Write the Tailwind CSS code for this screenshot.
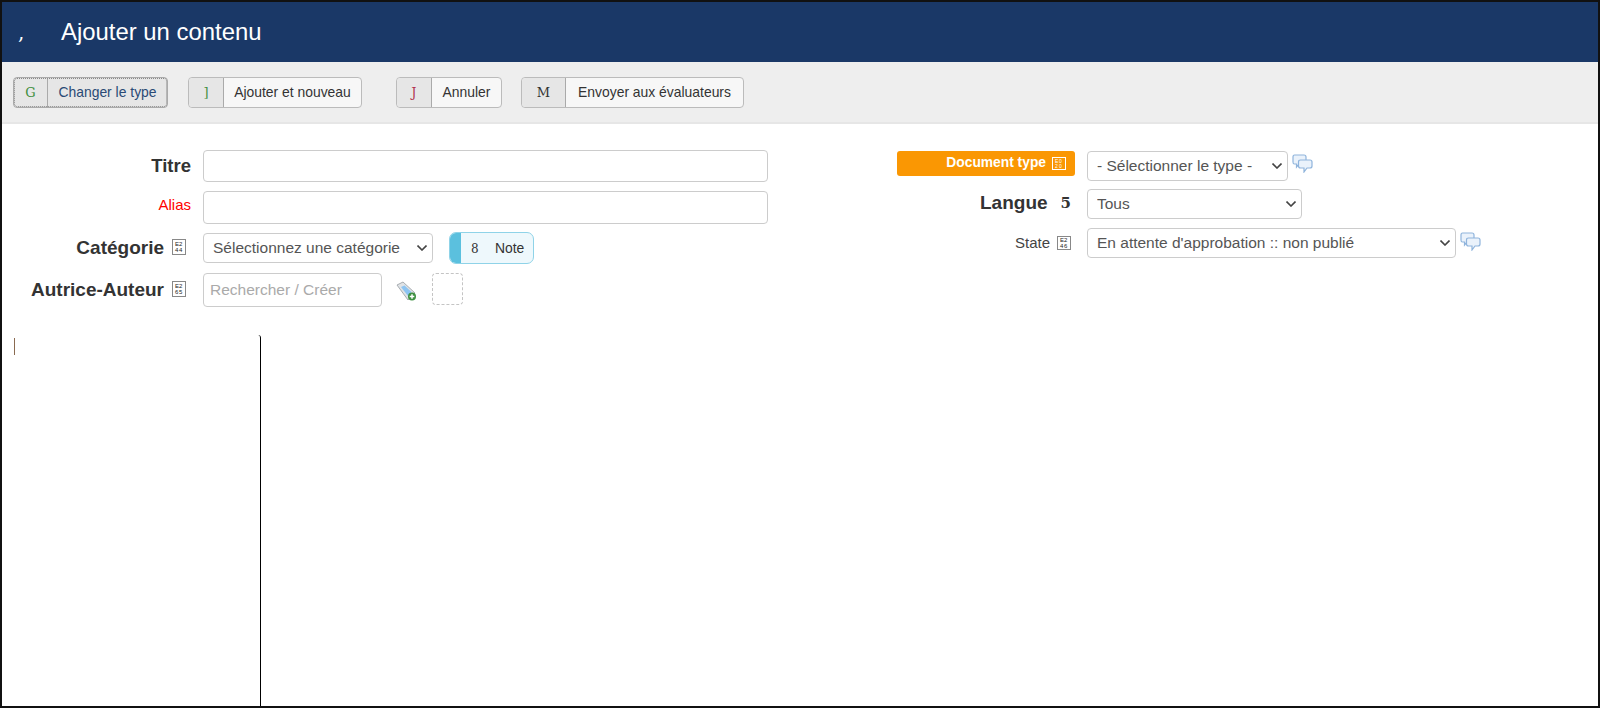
<!DOCTYPE html>
<html lang="fr">
  <head>
    <meta charset="UTF-8" />
    <title>Ajouter un contenu</title>
    <script src="https://cdn.jsdelivr.net/npm/@tailwindcss/browser@4"></script>
  </head>
  <body class="h-screen overflow-hidden bg-white border-2 border-[#111] flex flex-col font-['Liberation_Sans',Arial,sans-serif] text-[#333]">
    <!-- Title bar -->
    <header class="h-[60px] shrink-0 bg-[#1a3867] text-white flex items-center">
      <span class="w-[59px] pl-[16px] text-[20px] font-['DejaVu_Serif',serif]">,</span>
      <h1 class="text-[23.9px] -mt-[1px]">Ajouter un contenu</h1>
    </header>

    <!-- Toolbar -->
    <div class="h-[62px] shrink-0 bg-[#eeeeee] border-b-2 border-[#e6e6e6] flex items-center pl-[11px] text-[13.9px]">
      <button class="h-[31px] w-[155px] flex rounded-[4px] border border-[#aaa] outline-1 outline-dotted outline-offset-[-2px] outline-[#888] bg-[#e6e6e6] text-[#2a4a75]">
        <span class="w-[34px] h-full pt-[2px] bg-[#e6e6e6] border-r border-[#aaa] flex items-center justify-center font-['DejaVu_Serif',serif] text-[13px] text-[#3f8f3f] rounded-l-[4px]">G</span>
        <span class="flex-1 h-full flex items-center justify-center">Changer le type</span>
      </button>
      <button class="ml-[20px] h-[31px] w-[174px] flex rounded-[4px] border border-[#bbb] bg-[#f7f7f7] text-[#333]">
        <span class="w-[35px] h-full pt-[2px] bg-[#e6e6e6] border-r border-[#aaa] flex items-center justify-center font-['DejaVu_Serif',serif] text-[13px] text-[#3f8f3f] rounded-l-[4px]">]</span>
        <span class="flex-1 h-full flex items-center justify-center">Ajouter et nouveau</span>
      </button>
      <button class="ml-[34px] h-[31px] w-[106px] flex rounded-[4px] border border-[#bbb] bg-[#f7f7f7] text-[#333]">
        <span class="w-[35px] h-full pt-[2px] bg-[#e6e6e6] border-r border-[#aaa] flex items-center justify-center font-['DejaVu_Serif',serif] text-[12px] text-[#b0304a] rounded-l-[4px]">J</span>
        <span class="flex-1 h-full flex items-center justify-center">Annuler</span>
      </button>
      <button class="ml-[19px] h-[31px] w-[223px] flex rounded-[4px] border border-[#bbb] bg-[#f7f7f7] text-[#333]">
        <span class="w-[44px] h-full pt-[2px] bg-[#e6e6e6] border-r border-[#aaa] flex items-center justify-center font-['DejaVu_Serif',serif] text-[13px] text-[#333] rounded-l-[4px]">M</span>
        <span class="flex-1 h-full flex items-center justify-center">Envoyer aux évaluateurs</span>
      </button>
    </div>

    <!-- Form -->
    <section class="shrink-0 h-[211px] flex">
      <div class="w-[895px] pt-[25px] flex flex-col">
        <div class="flex items-center h-[33px]">
          <label class="w-[189px] text-right text-[18.5px] font-bold">Titre</label>
          <input type="text" class="ml-[12px] w-[565px] h-[32px] rounded-[4px] border border-[#ccc] bg-white" />
        </div>
        <div class="flex items-center h-[33px] mt-[9px]">
          <label class="w-[189px] text-right text-[15px] text-[#f00] -mt-[4px]">Alias</label>
          <input type="text" class="ml-[12px] w-[565px] h-[33px] rounded-[4px] border border-[#ccc] bg-white" />
        </div>
        <div class="flex items-center h-[32px] mt-[8px]">
          <label class="w-[189px] pr-[5px] flex justify-end items-center gap-[8px] text-[19px] font-bold">
            Catégorie
            <span class="-mt-[2px] w-[14px] h-[16px] border border-[#888] grid grid-cols-[4px_4px] justify-center content-center text-[6px] leading-[6px] font-normal text-[#222]"><i class="not-italic">E</i><i class="not-italic">2</i><i class="not-italic">4</i><i class="not-italic">4</i></span>
          </label>
          <div class="relative ml-[12px] w-[230px] h-[30px]">
            <select class="appearance-none w-full h-full rounded-[4px] border border-[#ccc] bg-white pl-[9px] text-[15.5px] text-[#555]">
              <option>Sélectionnez une catégorie</option>
            </select>
            <svg class="absolute right-[6px] top-[12px] w-[10px] h-[6px] pointer-events-none" viewBox="0 0 10 6" fill="none" stroke="#444" stroke-width="1.6"><path d="M0.5 0.5 L5 5 L9.5 0.5" /></svg>
          </div>
          <button class="ml-[16px] w-[85px] h-[32px] flex items-center rounded-[7px] border border-[#8fd3e8] bg-[#eef8fc] overflow-hidden text-[13.9px] text-[#333]">
            <span class="w-[11px] h-full bg-[#5bc0de]"></span>
            <span class="ml-[10px] w-[24px] text-left font-['DejaVu_Serif',serif] text-[12px] pt-[1px]">8</span>
            <span>Note</span>
          </button>
        </div>
        <div class="flex items-center h-[34px] mt-[9px]">
          <label class="w-[189px] pr-[5px] flex justify-end items-center gap-[8px] text-[19px] font-bold">
            Autrice-Auteur
            <span class="-mt-[2px] w-[14px] h-[16px] border border-[#888] grid grid-cols-[4px_4px] justify-center content-center text-[6px] leading-[6px] font-normal text-[#222]"><i class="not-italic">E</i><i class="not-italic">2</i><i class="not-italic">6</i><i class="not-italic">5</i></span>
          </label>
          <input type="text" placeholder="Rechercher / Créer" class="ml-[12px] w-[179px] h-[34px] rounded-[4px] border border-[#ccc] bg-white pl-[6px] pr-[7px] text-[15.5px] placeholder:text-[#aaa]" />
          <svg class="ml-[14px] mt-[1px] w-[21px] h-[20px]" viewBox="0 0 21 20" fill="none">
            <path d="M1 4 L7 1 L19 12 L12 19 Z" fill="#e0e3e6" stroke="#a8adb1" stroke-width="1" />
            <path d="M5 6 L8.5 4.5 L15.5 11 L12 15 Z" fill="#8cc4f2" />
            <circle cx="16" cy="15.5" r="4" fill="#3f9142" />
            <path d="M16 13.2 V17.8 M13.7 15.5 H18.3" stroke="#fff" stroke-width="1.5" />
          </svg>
          <div class="ml-[15px] -mt-[3px] w-[31px] h-[32px] rounded-[4px] border border-dashed border-[#c4c4c4]"></div>
        </div>
      </div>

      <div class="flex-1 pt-[26px] flex flex-col">
        <div class="flex items-center h-[31px]">
          <label class="w-[178px] h-[25px] -mt-[4px] rounded-[3px] bg-[#fa9703] text-white text-[13.8px] font-bold flex justify-end items-center gap-[6px] pr-[9px]">
            Document type
            <span class="w-[14px] h-[13px] border border-[#fff] grid grid-cols-[4px_4px] justify-center content-center text-[5px] leading-[5px] font-normal"><i class="not-italic">E</i><i class="not-italic">0</i><i class="not-italic">2</i><i class="not-italic">0</i></span>
          </label>
          <div class="relative ml-[12px] w-[201px] h-[30px]">
            <select class="appearance-none w-full h-full rounded-[4px] border border-[#ccc] bg-white pl-[9px] text-[15.5px] text-[#555]">
              <option>- Sélectionner le type -</option>
            </select>
            <svg class="absolute right-[6px] top-[12px] w-[10px] h-[6px] pointer-events-none" viewBox="0 0 10 6" fill="none" stroke="#444" stroke-width="1.6"><path d="M0.5 0.5 L5 5 L9.5 0.5" /></svg>
          </div>
          <svg class="ml-[4px] -mt-[5px] w-[21px] h-[19px]" viewBox="0 0 21 19" fill="#eaf2fb" stroke="#8fb4dc" stroke-width="1.2">
            <path d="M2.5 1 H12 Q14 1 14 3 V8 Q14 10 12 10 H7 L4.5 13 V10 H2.5 Q1 10 1 8 V3 Q1 1 2.5 1 Z" />
            <path d="M8.5 6 H18 Q20 6 20 8 V12 Q20 14 18 14 H15 L12 18 V14 H8.5 Q6.5 14 6.5 12 V8 Q6.5 6 8.5 6 Z" />
          </svg>
        </div>
        <div class="flex items-center h-[31px] mt-[7px]">
          <label class="w-[178px] pr-[4px] flex justify-end items-center gap-[13px] text-[19px] font-bold">
            Langue
            <span class="font-['DejaVu_Serif',serif] text-[15px]">5</span>
          </label>
          <div class="relative ml-[12px] w-[215px] h-[30px]">
            <select class="appearance-none w-full h-full rounded-[4px] border border-[#ccc] bg-white pl-[9px] text-[15.5px] text-[#555]">
              <option>Tous</option>
            </select>
            <svg class="absolute right-[6px] top-[12px] w-[10px] h-[6px] pointer-events-none" viewBox="0 0 10 6" fill="none" stroke="#444" stroke-width="1.6"><path d="M0.5 0.5 L5 5 L9.5 0.5" /></svg>
          </div>
        </div>
        <div class="flex items-center h-[30px] mt-[9px]">
          <label class="w-[178px] pr-[4px] flex justify-end items-center gap-[7px] text-[15px] text-[#444]">
            State
            <span class="w-[14px] h-[14px] border border-[#888] grid grid-cols-[4px_4px] justify-center content-center text-[6px] leading-[6px] text-[#222]"><i class="not-italic">E</i><i class="not-italic">2</i><i class="not-italic">4</i><i class="not-italic">6</i></span>
          </label>
          <div class="relative ml-[12px] w-[369px] h-[30px]">
            <select class="appearance-none w-full h-full rounded-[4px] border border-[#ccc] bg-white pl-[9px] text-[15.5px] text-[#555]">
              <option>En attente d'approbation :: non publié</option>
            </select>
            <svg class="absolute right-[6px] top-[12px] w-[10px] h-[6px] pointer-events-none" viewBox="0 0 10 6" fill="none" stroke="#444" stroke-width="1.6"><path d="M0.5 0.5 L5 5 L9.5 0.5" /></svg>
          </div>
          <svg class="ml-[4px] -mt-[4px] w-[21px] h-[19px]" viewBox="0 0 21 19" fill="#eaf2fb" stroke="#8fb4dc" stroke-width="1.2">
            <path d="M2.5 1 H12 Q14 1 14 3 V8 Q14 10 12 10 H7 L4.5 13 V10 H2.5 Q1 10 1 8 V3 Q1 1 2.5 1 Z" />
            <path d="M8.5 6 H18 Q20 6 20 8 V12 Q20 14 18 14 H15 L12 18 V14 H8.5 Q6.5 14 6.5 12 V8 Q6.5 6 8.5 6 Z" />
          </svg>
        </div>
      </div>
    </section>

    <!-- Editor -->
    <div class="flex-1 flex">
      <div class="w-[259px] border-r border-black rounded-tr-[3px] pl-[12px] pt-[3px]">
        <div class="w-px h-[17px] bg-[#8a6a50]"></div>
      </div>
    </div>
  </body>
</html>
